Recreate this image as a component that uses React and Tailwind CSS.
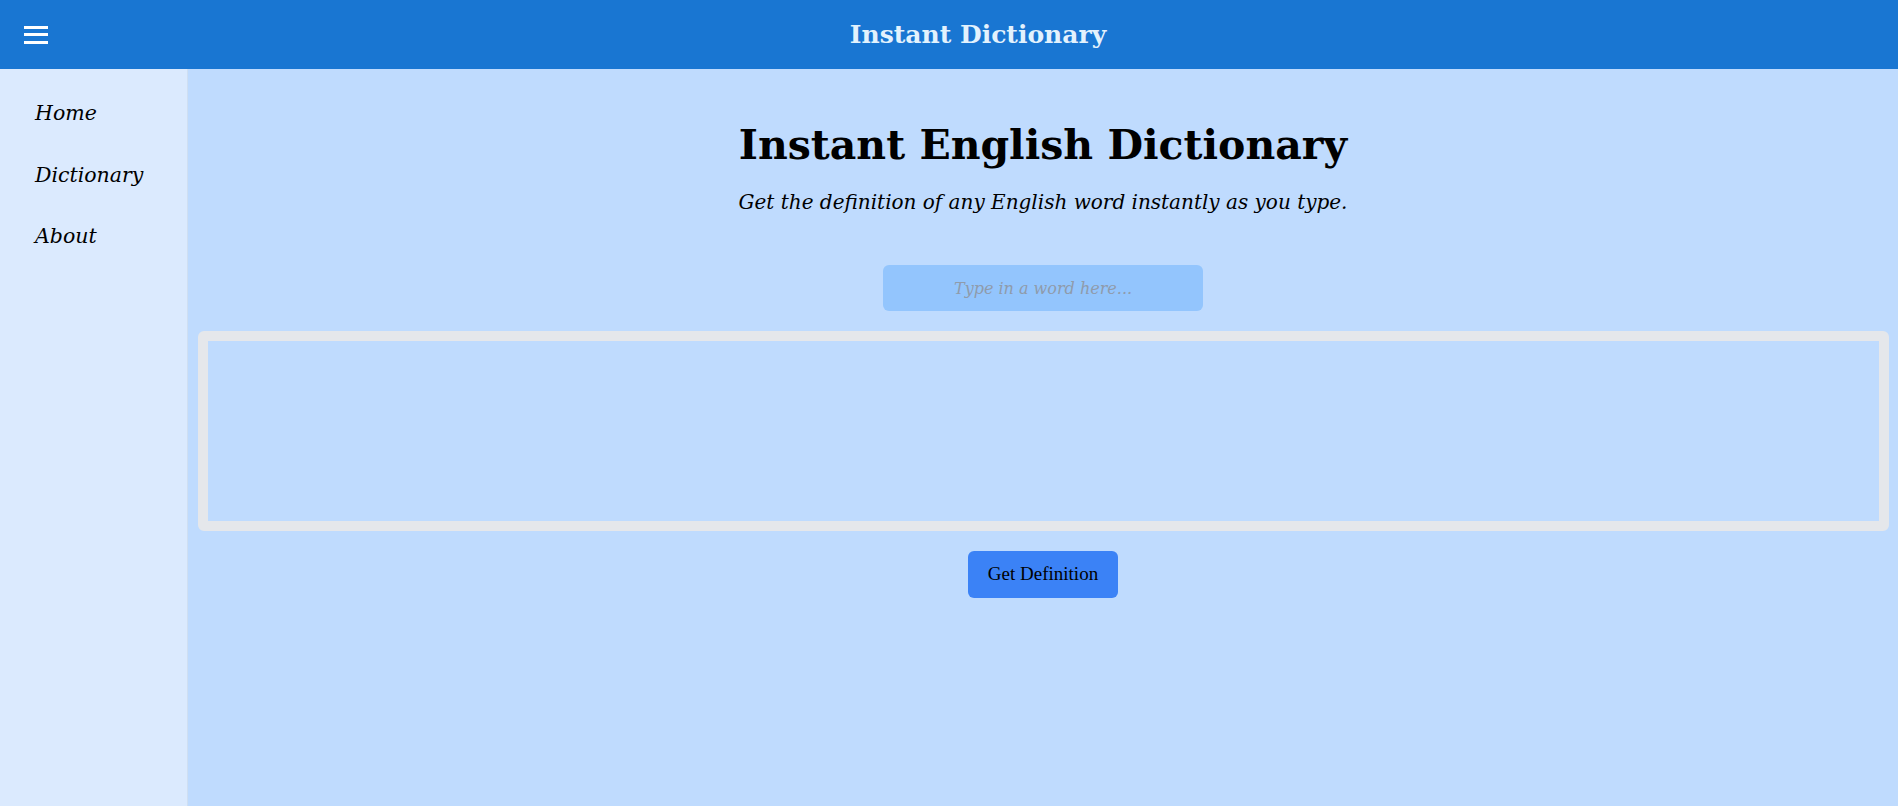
import { useState } from "react";

const serif = "font-['Georgia','DejaVu_Serif',serif]";

const App = () => {
  const [word, setWord] = useState("");

  return (
    <div className={`h-[806px] flex flex-col ${serif}`}>
      <header className="h-[69px] shrink-0 bg-[#1976d2] flex items-center">
        <button className="pl-6 pr-[10px] h-full flex items-center">
          <span className="w-6 h-[18px] flex flex-col justify-between">
            <span className="block h-[3px] bg-white" />
            <span className="block h-[3px] bg-white" />
            <span className="block h-[3px] bg-white" />
          </span>
        </button>
        <h1 className="flex-1 text-center text-[25px] font-bold text-[#e3f2fd]">
          Instant Dictionary
        </h1>
      </header>

      <div className="flex flex-1">
        <nav className="w-[188px] shrink-0 bg-[#dbeafe] border-r border-[#cfdff2] pt-[14px] px-[35px]">
          <ul className="flex flex-col">
            {["Home", "Dictionary", "About"].map((item) => (
              <li key={item} className="h-[61.5px] flex items-center italic text-[20.5px] text-black">
                {item}
              </li>
            ))}
          </ul>
        </nav>

        <main className="flex-1 bg-[#bfdbfe] flex flex-col items-center pt-[52px]">
          <h2 className="text-[41px] leading-[48px] font-bold text-black">
            Instant English Dictionary
          </h2>
          <p className="mt-[18px] italic text-[20px] text-black">
            Get the definition of any English word instantly as you type.
          </p>

          <input
            value={word}
            onChange={(e) => setWord(e.target.value)}
            placeholder="Type in a word here..."
            className="mt-[48px] w-[320px] h-[46px] rounded-md bg-[#93c5fd] text-center italic text-[16px] placeholder:text-[#8f9bab] outline-none"
          />

          <div className="mt-[20px] self-stretch ml-[10px] mr-[9px] h-[200px] border-[10px] border-[#e5e7eb] rounded-md"></div>

          <button className="mt-[20px] w-[150px] h-[47px] rounded-md bg-[#3b82f6] text-[19px] text-black font-['Liberation_Serif',serif]">
            Get Definition
          </button>
        </main>
      </div>
    </div>
  );
};

export default App;
